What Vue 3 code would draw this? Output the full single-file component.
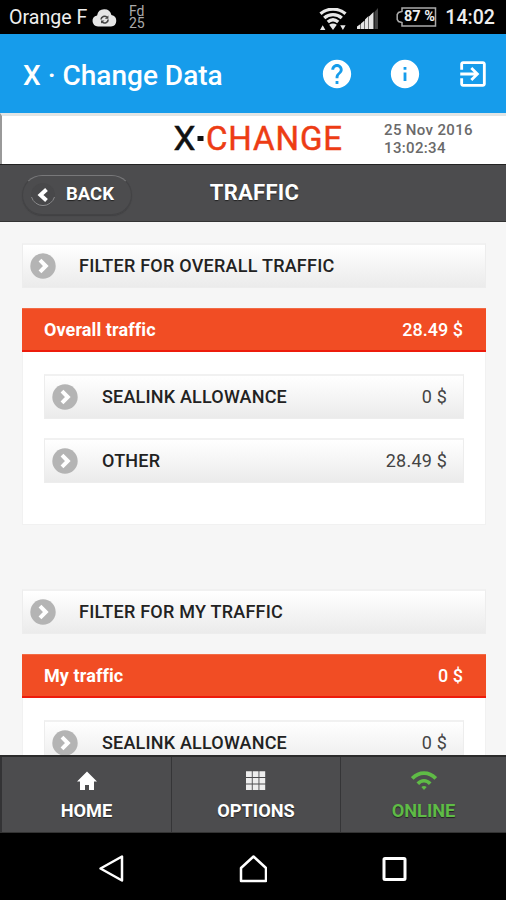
<script setup>
const sections = [
  {
    filter: 'FILTER FOR OVERALL TRAFFIC',
    title: 'Overall traffic',
    total: '28.49 $',
    rows: [
      { name: 'SEALINK ALLOWANCE', value: '0 $' },
      { name: 'OTHER', value: '28.49 $' },
    ],
  },
  {
    filter: 'FILTER FOR MY TRAFFIC',
    title: 'My traffic',
    total: '0 $',
    rows: [
      { name: 'SEALINK ALLOWANCE', value: '0 $' },
    ],
  },
]
</script>

<template>
  <div class="screen">
    <div class="status">
      <span class="carrier">Orange F</span>
      <svg class="cloud" width="25" height="19" viewBox="0 0 25 19">
        <path d="M6 18.5a5.6 5.6 0 0 1-.9-11.1A7.3 7.3 0 0 1 19.4 7 5.8 5.8 0 0 1 19 18.5z" fill="#e6e6e6" />
        <path d="M9 11.500a3.500 3.500 0 0 1 6-2.200M16.200 11.500a3.500 3.500 0 0 1-6 2.400" fill="none" stroke="#444" stroke-width="1.600" />
        <path d="M16.400 7.500v3.200h-3.500zM9 15.600v-3.200h3.500z" fill="#444" />
      </svg>
      <div class="fd"><span>Fd</span><span>25</span></div>
      <svg class="st-wifi" width="28" height="23" viewBox="0 0 28 23">
        <g fill="none" stroke="#e8e8e8" stroke-width="3.300">
          <path d="M1.500 5.700C8.500-.3 19.500-.3 26.500 5.700" />
          <path d="M5.200 10C10.200 5.600 17.800 5.600 22.800 10" />
          <path d="M8.800 14C12 11.200 16 11.200 19.200 14" />
        </g>
        <path d="M10.200 16.800c2.300-1.900 5.300-1.900 7.600 0L14 22zM1 22l2.700-4.800L6.400 22zM21.200 17.200h5.400L23.900 22z" fill="#e8e8e8" />
      </svg>
      <svg class="st-signal" width="22" height="21" viewBox="0 0 22 21">
        <path d="M0 21v-2.500l3.500-2.500V21zM4 21v-5.500l3.500-3v8.500zM8 21v-9.500l3.500-3.500v13zM12 21V8.500L16.500 4v17z" fill="#e6e6e6" />
        <path d="M17.500 21V4L21 0v21z" fill="#444" />
      </svg>
      <div class="battery">
        <svg width="41" height="20" viewBox="0 0 41 20">
          <path d="M6 1h33.500v18H6v-3.500L2.500 14.500 1.200 12.500v-5L2.500 5.500 6 4.500z" fill="none" stroke="#aaa" stroke-width="1.500" />
        </svg>
        <span>87 %</span>
      </div>
      <span class="clock">14:02</span>
    </div>

    <header class="appbar">
      <h1>X · Change Data</h1>
      <svg width="34" height="34" viewBox="0 0 24 24"><path fill="#fff" d="M12 2C6.480 2 2 6.480 2 12s4.480 10 10 10 10-4.480 10-10S17.520 2 12 2zm1 17h-2v-2h2v2zm2.070-7.750-.9.920C13.450 12.900 13 13.500 13 15h-2v-.5c0-1.100.45-2.100 1.170-2.830l1.240-1.260c.37-.36.59-.86.59-1.410 0-1.100-.9-2-2-2s-2 .9-2 2H8c0-2.210 1.790-4 4-4s4 1.790 4 4c0 .88-.36 1.680-.93 2.250z" /></svg>
      <svg width="34" height="34" viewBox="0 0 24 24"><path fill="#fff" d="M12 2C6.480 2 2 6.480 2 12s4.480 10 10 10 10-4.480 10-10S17.520 2 12 2zm1 15h-2v-6h2v6zm0-8h-2V7h2v2z" /></svg>
      <svg width="34" height="34" viewBox="0 0 24 24"><path fill="#fff" d="M10.090 15.590 11.500 17l5-5-5-5-1.410 1.410L12.670 11H3v2h9.670l-2.580 2.590zM19 3H5c-1.110 0-2 .9-2 2v4h2V5h14v14H5v-4H3v4c0 1.100.89 2 2 2h14c1.100 0 2-.9 2-2V5c0-1.100-.9-2-2-2z" /></svg>
    </header>

    <div class="brand">
      <svg class="logo" width="170" height="44" viewBox="0 0 170 44">
        <text class="lx" x="0.500" y="31" textLength="22" lengthAdjust="spacingAndGlyphs">X</text>
        <rect x="24.500" y="17" width="6" height="5" fill="#111" />
        <text class="lc" x="33" y="31" textLength="136" lengthAdjust="spacing">CHANGE</text>
      </svg>
      <div class="date"><span>25 Nov 2016</span><span>13:02:34</span></div>
    </div>

    <div class="titlebar">
      <div class="back">
        <svg width="26" height="26" viewBox="0 0 26 26">
          <circle cx="13" cy="13" r="12" fill="#48484a" />
          <path d="M1.500 15a12 12 0 0 0 23 0" fill="none" stroke="#8b8b8d" stroke-width="1" />
          <path d="M16.500 7.500 10.500 13l6 5.500" fill="none" stroke="#fff" stroke-width="4" />
        </svg>
        <span>BACK</span>
      </div>
      <h2>TRAFFIC</h2>
      <i></i>
    </div>

    <main>
      <section v-for="s in sections" :key="s.title">
        <div class="btn filter">
          <svg width="26" height="26" viewBox="0 0 26 26"><circle cx="13" cy="13" r="12.700" fill="#b4b4b4" /><path d="M10 7.200 15.800 13 10 18.800" fill="none" stroke="#fff" stroke-width="4" /></svg>
          <span class="name">{{ s.filter }}</span>
        </div>
        <div class="head"><b>{{ s.title }}</b><span>{{ s.total }}</span></div>
        <div class="panel">
          <div v-for="r in s.rows" :key="r.name" class="btn">
            <svg width="26" height="26" viewBox="0 0 26 26"><circle cx="13" cy="13" r="12.700" fill="#b4b4b4" /><path d="M10 7.200 15.800 13 10 18.800" fill="none" stroke="#fff" stroke-width="4" /></svg>
            <span class="name">{{ r.name }}</span>
            <span class="val">{{ r.value }}</span>
          </div>
        </div>
      </section>
    </main>

    <nav class="tabs">
      <div class="tab">
        <svg width="26" height="20" viewBox="0 0 26 20"><path d="M13 .5 23 10.500h-3V19h-5v-5h-4v5H6v-8.500H3z" fill="#fff" /></svg>
        <span>HOME</span>
      </div>
      <div class="tab">
        <svg width="26" height="20" viewBox="0 0 26 20"><path d="M3 .3h5.800v5.600H3zm6.700 0h5.800v5.600h-5.800zm6.700 0h5.800v5.600h-5.800zM3 6.900h5.800v5.600H3zm6.700 0h5.800v5.600h-5.800zm6.700 0h5.800v5.600h-5.800zM3 13.500h5.800v5.600H3zm6.700 0h5.800v5.600h-5.800zm6.700 0h5.800v5.600h-5.800z" fill="#eee" /></svg>
        <span>OPTIONS</span>
      </div>
      <div class="tab online">
        <svg width="26" height="20" viewBox="0 0 26 20"><g fill="none" stroke="#5fbb46"><path d="M1.200 7.500C8 .4 18 .4 24.800 7.500" stroke-width="3.800" /><path d="M6.800 12.800c3.700-4 8.700-4 12.400 0" stroke-width="3.600" /></g><path d="M10.300 16.100c1.600-1.500 3.800-1.500 5.400 0L13 19.100z" fill="#5fbb46" /></svg>
        <span>ONLINE</span>
      </div>
    </nav>

    <div class="sysnav">
      <svg width="28" height="30" viewBox="0 0 28 30"><path d="M24 2.500v24L2.500 14.500z" fill="none" stroke="#fff" stroke-width="2.500" stroke-linejoin="round" /></svg>
      <svg width="28" height="30" viewBox="0 0 28 30"><path d="M2 27V14L14.500 2.500 27 14v13z" fill="none" stroke="#fff" stroke-width="2.500" stroke-linejoin="round" /></svg>
      <svg width="28" height="30" viewBox="0 0 28 30"><rect x="4" y="4.500" width="21" height="21" rx="1" fill="none" stroke="#fff" stroke-width="3" /></svg>
    </div>
  </div>
</template>

<style>
body { margin: 0; overflow: hidden; }
</style>

<style scoped>
* { box-sizing: border-box; }
.screen { width: 506px; height: 900px; display: flex; flex-direction: column; overflow: hidden; font-family: Roboto, sans-serif; background: #f6f6f6; }
.screen > * { flex-shrink: 0; }
svg { display: block; flex-shrink: 0; }
span, b, h1, h2 { white-space: nowrap; }
.status { height: 34px; background: #000; color: #eee; display: flex; align-items: center; padding: 0 11px 0 9px; font-size: 19.6px; line-height: 24px; }
.carrier { width: 83px; padding-top: 2px; }
.fd { width: 18px; margin-left: 12px; display: flex; flex-direction: column; color: #aaa; font-size: 14px; line-height: 12px; }
.st-wifi { margin: 4px 0 0 172px; }
.st-signal { margin: 3px 0 0 10px; }
.battery { position: relative; margin-left: 17px; width: 41px; }
.battery span { position: absolute; left: 8px; top: 0; font-size: 14.500px; line-height: 20px; font-weight: 700; }
.clock { margin-left: auto; padding-top: 2px; font-weight: 500; }
.appbar { height: 79px; background: #169ceb; display: flex; align-items: center; padding: 0 16px 0 23px; gap: 34px; }
.appbar h1 { margin: 3px auto 0 0; font-size: 28px; font-weight: 500; color: #fff; }
.brand { height: 51px; background: #fff; border-top: 3px solid #e2e5e5; border-left: 2px solid #999; display: flex; }
.logo { margin: 3px 0 0 171px; }
.lx, .lc { font-size: 33px; stroke-width: .5; }
.lx { fill: #111; stroke: #111; }
.lc { fill: #ed3c14; stroke: #ed3c14; }
.date { margin: 5px 0 0 41px; display: flex; flex-direction: column; font-size: 15px; line-height: 18px; letter-spacing: .35px; color: #6a6a6a; font-weight: 500; }
.titlebar { height: 58px; background: #4c4c4e; border-top: 1px solid #222; border-bottom: 1px solid #333; display: grid; grid-template-columns: 1fr auto 1fr; align-items: center; padding: 0 19px 0 22px; color: #fff; }
.back { width: 110px; height: 40px; margin-top: 4px; border-radius: 20px; border: 1px solid #434345; border-top-color: #78787a; box-shadow: 0 1px 1px #414143; display: flex; align-items: center; padding-left: 7px; gap: 10px; font-weight: 700; font-size: 18.500px; text-shadow: 0 1px 1px #222; }
.back span { margin-top: -2px; }
.titlebar h2 { margin: -1px 0 0; font-size: 22px; letter-spacing: .3px; font-weight: 700; text-shadow: 0 1px 1px #222; }
main { height: 533px; overflow: hidden; padding: 21px 20px 0 22px; background: #f6f6f6; }
section { height: 346px; }
.btn { height: 45px; border: 1px solid #ededed; border-top: 2px solid #f1f1f1; background: linear-gradient(#fff, #ebebeb); display: flex; align-items: center; padding: 0 16px 0 7px; }
.name { margin: -2px 0 0 24px; font-size: 18px; font-weight: 500; color: #222; letter-spacing: .19px; }
.filter .name { margin-left: 23px; letter-spacing: .24px; }
.val { margin: -2px 0 0 auto; font-size: 18px; color: #444; letter-spacing: .2px; }
.head { height: 44px; margin-top: 20px; background: #f14d24; border-top: 1px solid #f26b45; border-bottom: 2px solid #ed1c0c; color: #fff; display: flex; justify-content: space-between; align-items: center; padding: 0 23px 0 22px; font-size: 18px; }
.head b { letter-spacing: .1px; }
.head span { font-weight: 500; }
.panel { height: 173px; background: #fff; border: 1px solid #f1f1f1; border-top: 0; padding: 22px 21px 0; display: flex; flex-direction: column; gap: 19px; }
.panel .btn { flex-shrink: 0; }
.tabs { height: 78px; display: grid; grid-template-columns: 170px 169px 1fr; padding-left: 2px; background: #333335; border-top: 2px solid #2b2b2b; border-bottom: 1px solid #333; }
.tab { background: #4c4c4e; border-right: 1px solid #353537; display: flex; flex-direction: column; align-items: center; padding-top: 14px; color: #fff; font-size: 18.200px; font-weight: 700; line-height: 22px; }
.tab span { margin-top: 9px; text-shadow: 0 1px 1px #222; }
.tab.online { color: #5fbb46; border-right: 0; }
.sysnav { height: 67px; background: #000; display: flex; justify-content: center; align-items: center; gap: 113px; padding-top: 5px; }
</style>
